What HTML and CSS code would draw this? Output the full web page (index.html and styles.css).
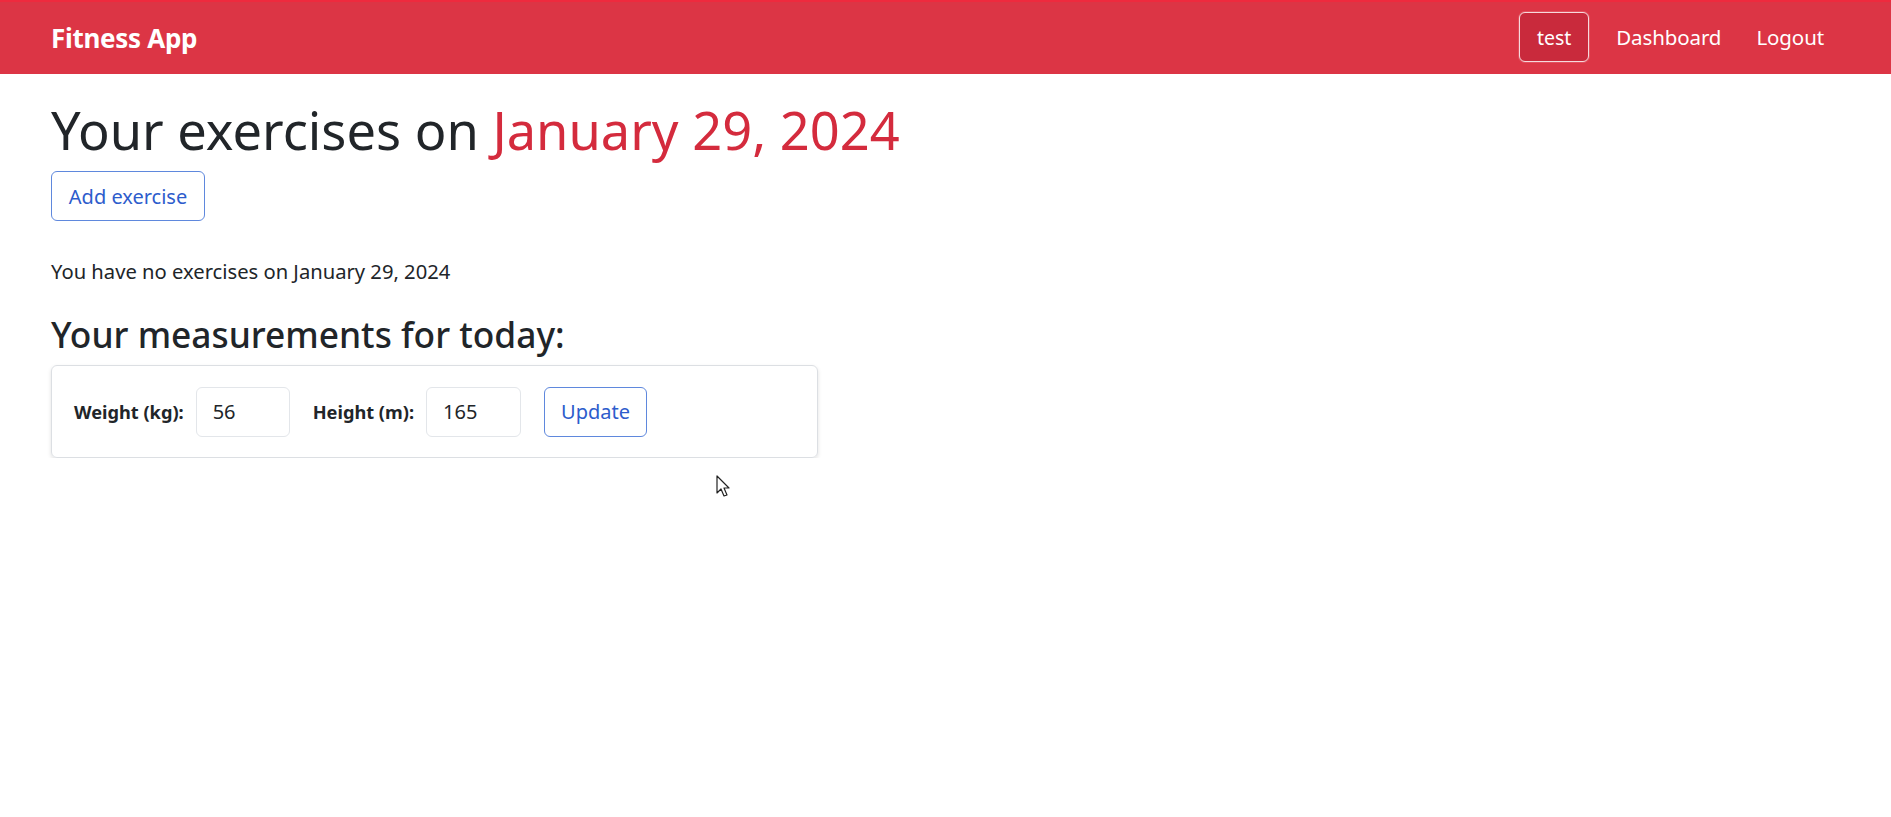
FILE: index.html
```html
<!DOCTYPE html>
<html lang="en">
<head>
<meta charset="utf-8">
<title>Fitness App</title>
<link rel="stylesheet" href="styles.css">
</head>
<body>
<nav class="navbar">
  <a class="brand" href="#">Fitness App</a>
  <div class="nav-links">
    <a class="nav-user" href="#">test</a>
    <a class="nav-link" href="#">Dashboard</a>
    <a class="nav-link" href="#">Logout</a>
  </div>
</nav>
<main class="content">
  <h1 class="title">Your exercises on <span class="date">January 29, 2024</span></h1>
  <a class="btn-outline add-btn" href="#">Add exercise</a>
  <p class="empty">You have no exercises on January 29, 2024</p>
  <h3 class="subtitle">Your measurements for today:</h3>
  <form class="card">
    <label class="field-label">Weight (kg):</label>
    <input class="field field-weight" type="text" value="56">
    <label class="field-label">Height (m):</label>
    <input class="field field-height" type="text" value="165">
    <button class="btn-outline update-btn" type="button">Update</button>
  </form>
</main>
<svg class="cursor" width="16" height="24" viewBox="0 0 16 24">
  <path d="M1 1 L1 18 L5 14 L8 21 L11 20 L8 13 L13 13 Z" fill="#fff" stroke="#222" stroke-width="1.2" stroke-linejoin="round"/>
</svg>
</body>
</html>
```
FILE: styles.css
```css
html, body {
  margin: 0;
  padding: 0;
  background: #fff;
  font-family: "Noto Sans", "Open Sans", sans-serif;
  color: #212529;
}
a { text-decoration: none; }

.navbar {
  height: 74px;
  background: #dc3545;
  border-top: 2px solid #ee2a3e;
  box-sizing: border-box;
  display: flex;
  align-items: center;
  justify-content: space-between;
  padding: 0 67px 0 51px;
}
.brand {
  color: #fff;
  font-weight: 700;
  font-size: 26px;
  letter-spacing: -0.3px;
}
.nav-links {
  display: flex;
  align-items: center;
  margin-top: -2px;
}
.nav-user {
  color: #fff;
  font-size: 19.5px;
  width: 70px;
  height: 50px;
  box-sizing: border-box;
  display: flex;
  align-items: center;
  justify-content: center;
  border: 1.5px solid #f6d9dc;
  border-radius: 6px;
  background: #c92a3c;
  box-shadow: 0 0 0 1px #e2505e;
  margin-right: 27px;
}
.nav-link {
  color: #fff;
  font-size: 20.5px;
  letter-spacing: -0.1px;
}
.nav-link + .nav-link { margin-left: 35px; }

.content {
  padding: 0 51px;
}
.title {
  margin: 25px 0 10px;
  font-size: 52.4px;
  font-weight: 400;
  line-height: 62px;
}
.date { color: #d42b3d; }

.btn-outline {
  display: inline-flex;
  align-items: center;
  justify-content: center;
  box-sizing: border-box;
  height: 50px;
  border: 1px solid #5f88dd;
  border-radius: 6px;
  color: #2d5ccc;
  background: #fff;
  font-family: inherit;
  font-size: 20px;
}
.add-btn { width: 154px; }

.empty {
  margin: 36px 0 0;
  font-size: 20.2px;
  line-height: 28px;
}
.subtitle {
  margin: 28px 0 0;
  font-size: 35.3px;
  font-weight: 500;
  line-height: 42px;
}
.card {
  margin-top: 10px;
  width: 767px;
  height: 93px;
  box-sizing: border-box;
  border: 1px solid #dcdfe3;
  border-radius: 6px;
  box-shadow: 0 2px 4px rgba(0,0,0,0.12);
  display: flex;
  align-items: center;
  padding: 0 22px;
}
.field-label {
  font-weight: 700;
  font-size: 18.2px;
  margin-right: 12px;
}
.field {
  height: 50px;
  box-sizing: border-box;
  border: 1px solid #e3e6ea;
  border-radius: 6px;
  padding: 0 16px;
  font-family: inherit;
  font-size: 20px;
  color: #212529;
  margin-right: 23px;
}
.field-weight { width: 94px; }
.field-height { width: 95px; }
.update-btn { width: 103px; }

.cursor {
  position: absolute;
  left: 716px;
  top: 475px;
}
```
